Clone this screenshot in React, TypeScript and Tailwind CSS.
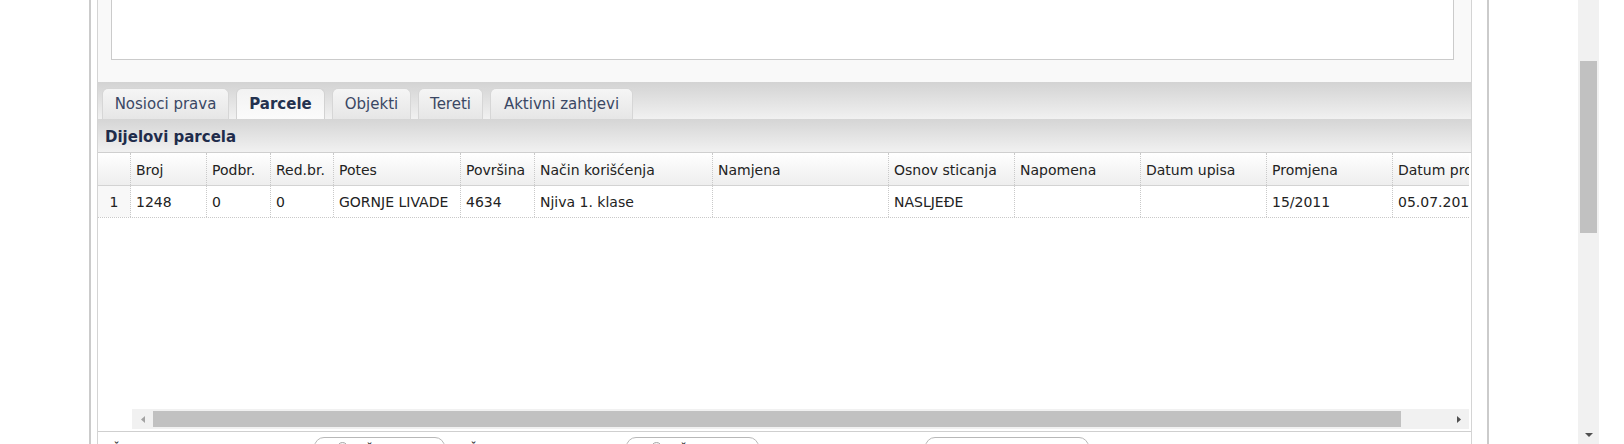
import React from "react";

const cols = [
  { w: 33, h: "", d: "1" },
  { w: 76, h: "Broj", d: "1248" },
  { w: 64, h: "Podbr.", d: "0" },
  { w: 63, h: "Red.br.", d: "0" },
  { w: 127, h: "Potes", d: "GORNJE LIVADE" },
  { w: 74, h: "Površina", d: "4634" },
  { w: 178, h: "Način korišćenja", d: "Njiva 1. klase" },
  { w: 176, h: "Namjena", d: "" },
  { w: 126, h: "Osnov sticanja", d: "NASLJEĐE" },
  { w: 126, h: "Napomena", d: "" },
  { w: 126, h: "Datum upisa", d: "" },
  { w: 126, h: "Promjena", d: "15/2011" },
  { w: 150, h: "Datum promjene", d: "05.07.2011" },
];

const tabs = [
  { label: "Nosioci prava", w: "w-[127px]", active: false },
  { label: "Parcele", w: "w-[89px]", active: true },
  { label: "Objekti", w: "w-[79px]", active: false },
  { label: "Tereti", w: "w-[65px]", active: false },
  { label: "Aktivni zahtjevi", w: "w-[143px]", active: false },
];

const gridCols =
  "grid grid-cols-[33px_76px_64px_63px_127px_74px_178px_176px_126px_126px_126px_126px_150px]";

function Tab({ label, w, active }: { label: string; w: string; active: boolean }) {
  return (
    <div
      className={
        "h-[31px] flex items-center justify-center pt-[1px] rounded-t-[6px] border border-b-0 text-[15px] whitespace-nowrap " +
        w +
        (active
          ? " font-bold border-[#d2d2d2] bg-linear-to-b from-[#f2f2f2] to-[#fbfbfb] text-[#24324f]"
          : " border-[#d6d6d6] bg-linear-to-b from-[#f5f5f5] to-[#e6e6e6] text-[#3a4764]")
      }
    >
      {label}
    </div>
  );
}

function Panel() {
  return (
    <div className="w-[1375px] h-full border-x border-[#d4d4d4] flex flex-col overflow-hidden">
      {/* top section with textarea */}
      <div className="h-[82px] shrink-0 bg-[#f9f9f9] pl-[13px] pr-[17px]">
        <div className="h-[60px] bg-white border-x border-b border-[#cbcbcb]" />
      </div>
      {/* tab strip */}
      <div className="h-[37px] shrink-0 pt-[6px] pl-[4px] flex items-end gap-[7px] bg-linear-to-b from-[#d3d3d3] to-[#f1f1f1]">
        {tabs.map((t) => (
          <Tab key={t.label} {...t} />
        ))}
      </div>
      {/* section header */}
      <div className="h-[33px] shrink-0 flex items-center pl-[7px] pt-[3px] bg-linear-to-b from-[#d5d5d5] to-[#f1f1f1] text-[15px] font-bold text-[#1f2c4b]">
        Dijelovi parcela
      </div>
      {/* table */}
      <div className="h-[280px] shrink-0 border-t border-b border-[#cfcfcf] bg-white flex flex-col pb-[2px]">
        <div className="mr-[2px] overflow-hidden shrink-0">
          <div className={gridCols + " w-max h-[33px] border-b border-[#d3d3d3] bg-linear-to-b from-white to-[#eeeeee]"}>
            {cols.map((c, i) => (
              <div
                key={i}
                className="h-full flex items-center pl-[5px] pt-[2px] border-r border-dotted border-[#c9c9c9] text-[14px] text-[#222] whitespace-nowrap overflow-hidden"
              >
                {c.h}
              </div>
            ))}
          </div>
          <div className={gridCols + " w-max h-[32px] border-b border-dotted border-[#c9c9c9]"}>
            {cols.map((c, i) => (
              <div
                key={i}
                className={
                  "h-full flex items-center pt-[2px] border-r border-dotted border-[#c9c9c9] text-[14px] text-[#222] whitespace-nowrap overflow-hidden " +
                  (i === 0 ? "justify-center bg-[#f8f8f8]" : "pl-[5px]")
                }
              >
                {c.d}
              </div>
            ))}
          </div>
        </div>
        <div className="flex-1" />
        {/* horizontal scrollbar */}
        <div className="h-[20px] shrink-0 ml-[34px] mr-[2px] bg-[#f1f1f1] flex">
          <div className="w-[21px] flex items-center justify-center">
            <svg width="4" height="7" viewBox="0 0 4 7">
              <path d="M4 0 L0 3.5 L4 7 Z" fill="#a3a3a3" />
            </svg>
          </div>
          <div className="w-[1248px] my-[2px] bg-[#c1c1c1]" />
          <div className="flex-1" />
          <div className="w-[21px] flex items-center justify-center">
            <svg width="4" height="7" viewBox="0 0 4 7">
              <path d="M0 0 L4 3.5 L0 7 Z" fill="#505050" />
            </svg>
          </div>
        </div>
      </div>
      {/* bottom form row (cut off) */}
      <div className="h-[60px] shrink-0 bg-white pl-[13px] pt-[5px] flex items-start text-[14px] text-[#222]">
        <div className="w-[203px] pt-[3px] whitespace-nowrap">Čestica</div>
        <div className="w-[131px] h-[30px] rounded-[10px] border border-[#b8b8b8] flex items-start pt-[4px] pl-[22px] gap-[16px]">
          <div className="w-[11px] h-[11px] rounded-full border border-[#a8a8a8] bg-[#f4f4f4]" />
          <div className="-mt-[1px]">Č</div>
        </div>
        <div className="w-[158px] ml-[23px] pt-[3px] whitespace-nowrap">Čestica</div>
        <div className="w-[133px] h-[30px] rounded-[10px] border border-[#b8b8b8] flex items-start pt-[4px] pl-[24px] gap-[16px]">
          <div className="w-[11px] h-[11px] rounded-full border border-[#a8a8a8] bg-[#f4f4f4]" />
          <div className="-mt-[1px]">Č</div>
        </div>
        <div className="w-[166px]" />
        <div className="w-[164px] h-[30px] rounded-[10px] border border-[#b8b8b8]" />
      </div>
    </div>
  );
}

export default function App() {
  return (
    <div className="w-[1624px] h-[444px] overflow-hidden bg-white font-['DejaVu_Sans',sans-serif] flex">
      <div className="w-[89px] shrink-0" />
      <div className="w-[1400px] shrink-0 h-full border-x-2 border-[#cbcbcb] pl-[6px] pr-[15px]">
        <Panel />
      </div>
      <div className="w-[89px] shrink-0" />
      <div className="w-[21px] shrink-0 h-full bg-[#f1f1f1] flex flex-col">
        <div className="mt-[61px] ml-[2px] w-[17px] h-[172px] bg-[#c1c1c1]" />
        <div className="flex-1" />
        <div className="flex justify-center mb-[7px]">
          <svg width="8" height="4" viewBox="0 0 8 4">
            <path d="M0 0 L8 0 L4 4 Z" fill="#505050" />
          </svg>
        </div>
      </div>
    </div>
  );
}
